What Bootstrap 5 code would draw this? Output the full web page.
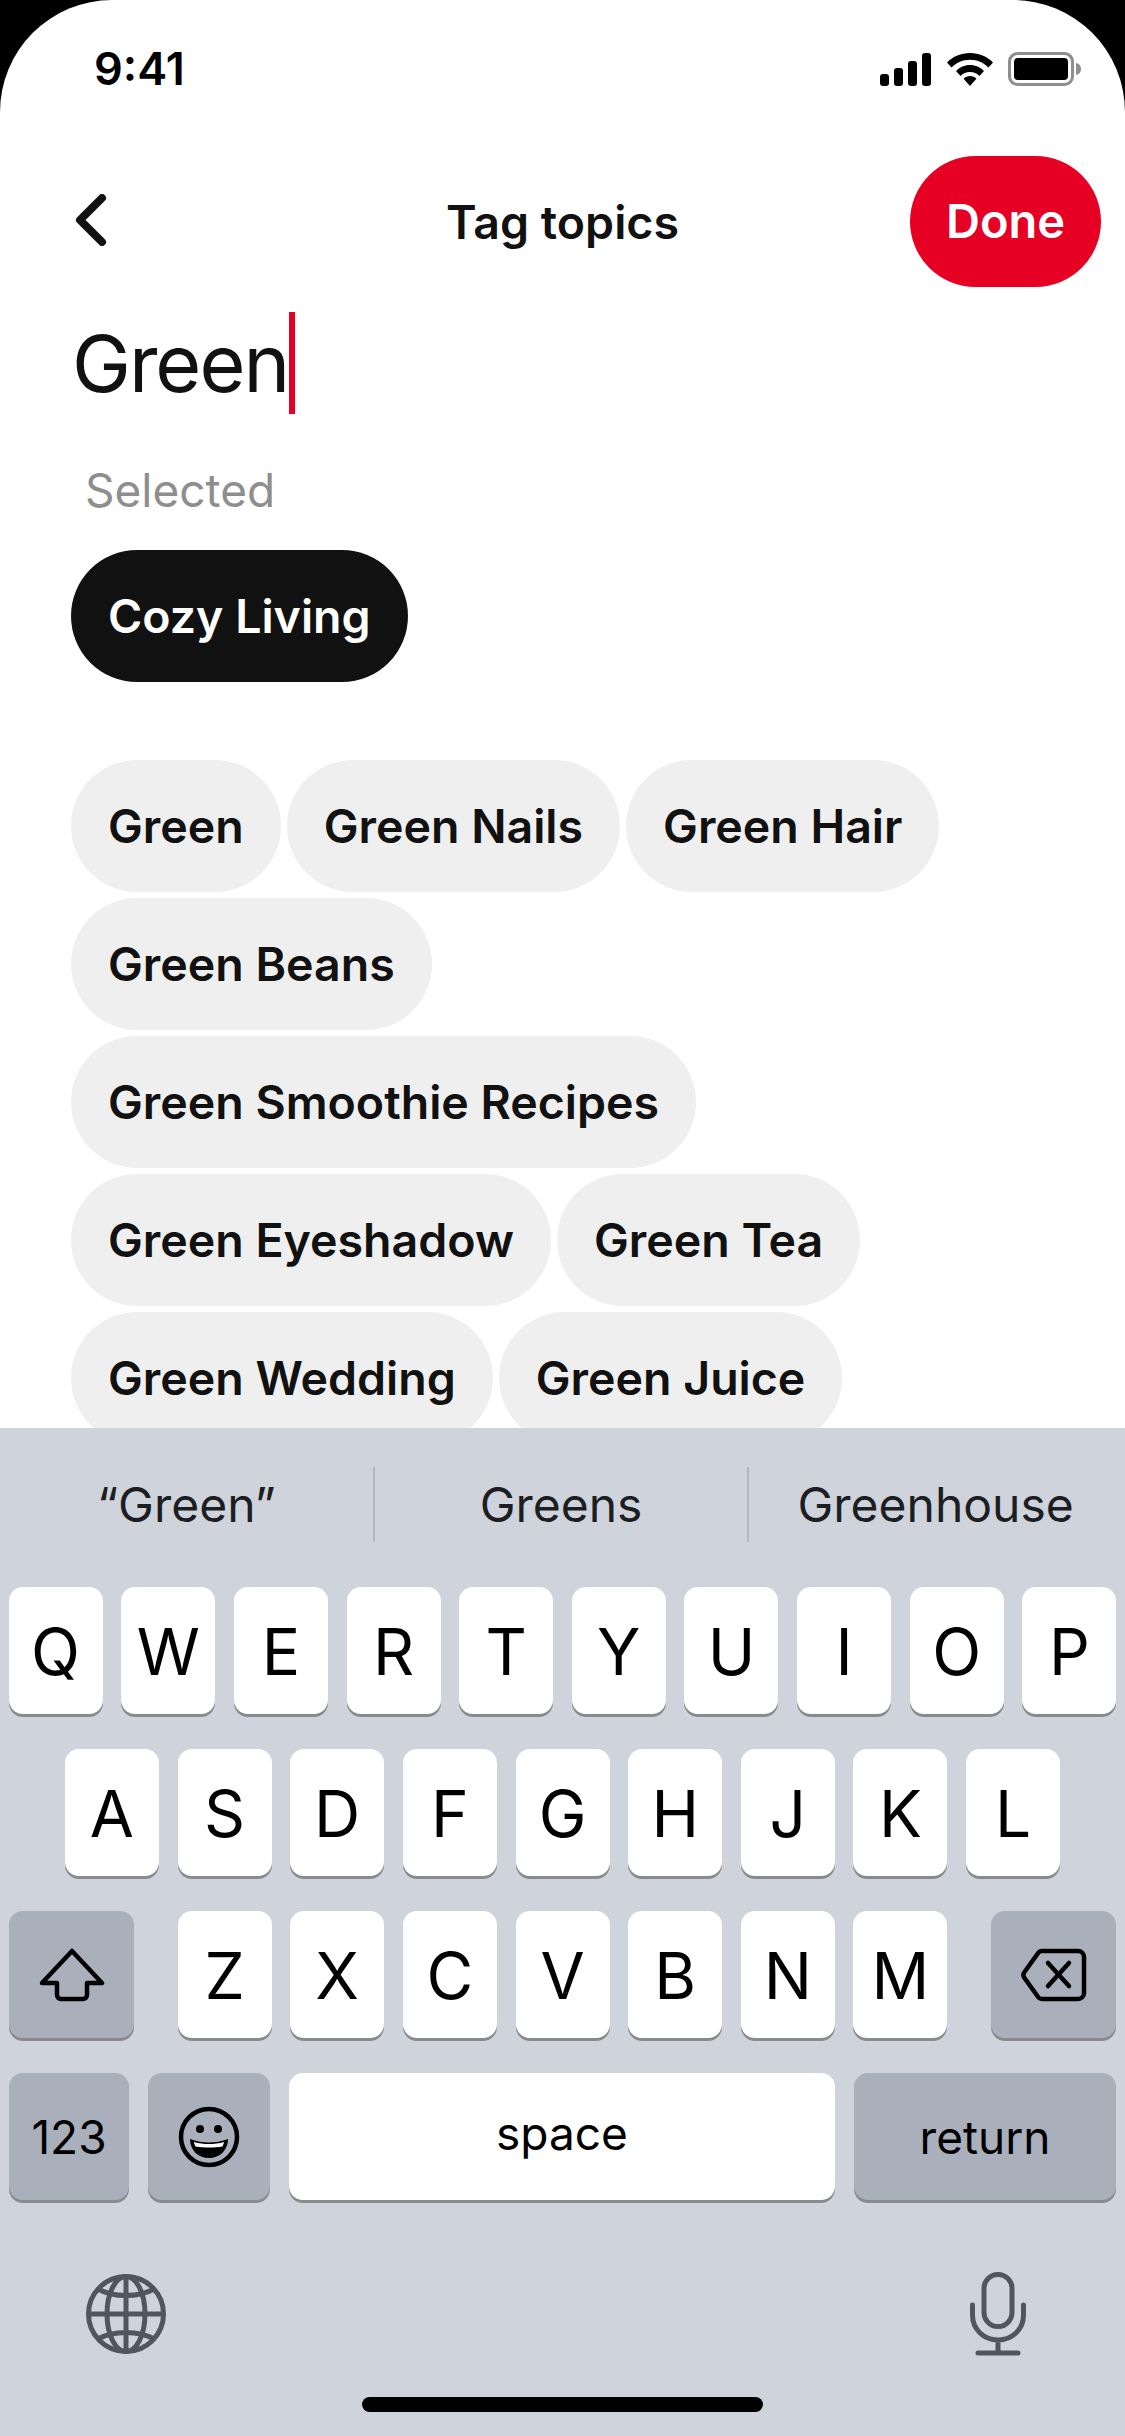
<!DOCTYPE html>
<html lang="en">
<head>
  <meta charset="UTF-8">
  <title>Tag topics</title>
  <link href="https://cdn.jsdelivr.net/npm/bootstrap@5.3.2/dist/css/bootstrap.min.css" rel="stylesheet">
  <style>
    html, body { background: #000; margin: 0; }
    body { font-family: "Inter", "Liberation Sans", sans-serif; color: #111; }
    .phone-screen { width: 1125px; height: 2436px; background: #fff; border-radius: 112px 112px 0 0; overflow: hidden; }

    .top-area { height: 1428px; overflow: hidden; }
    .status-row { height: 156px; padding: 44px 43px 0 94px; }
    .status-time { font-size: 45px; font-weight: 600; line-height: 50px; color: #000; }
    .status-icons { margin-top: 8px; gap: 15px; }
    .header-row { display: grid; grid-template-columns: 1fr auto 1fr; align-items: center; height: 131px; padding: 0 24px; }
    .back-btn { margin-left: 50px; margin-top: 3px; }
    .page-title { font-size: 46.5px; font-weight: 560; margin: 0; line-height: 56px; }
    .done-btn { background: #e60023; color: #fff; border: 0; border-radius: 66px; width: 191px; height: 131px; font-size: 47px; font-weight: 560; padding: 0; }
    .done-btn:hover { background: #e60023; color: #fff; }
    .search-word { margin-top: 25px; height: 102px; padding-left: 72px; font-size: 79px; line-height: 102px; letter-spacing: -2px; }
    .text-caret { width: 6px; height: 102px; background: #e60023; margin-left: 1px; }
    .selected-label { margin-top: 48px; padding-left: 85px; font-size: 46px; line-height: 56px; color: #8e8e8e; }
    .chip-list { padding-left: 71px; padding-right: 100px; gap: 6px; }
    .chip-list.picked { margin-top: 32px; }
    .chip-list.found { margin-top: 78px; }
    .topic-chip { height: 132px; padding: 0 37px; border: 0; border-radius: 66px; font-size: 46.5px; font-weight: 560; background: #efefef; color: #111; line-height: 1; }
    .topic-chip:hover { background: #efefef; color: #111; }
    .topic-chip.on, .topic-chip.on:hover { background: #111; color: #fff; }

    .kb-panel { height: 1008px; background: #cfd3dc; }
    .suggest-row { height: 159px; padding: 39px 3px 0 0; }
    .suggest-item { flex: 1 1 0; height: 75px; font-size: 48px; color: #1c1e21; }
    .suggest-sep { width: 2px; height: 75px; background: #b4b8c1; }
    .key-row { height: 129px; margin-bottom: 33px; gap: 18.67px; }
    .kb-key { width: 94px; height: 127px; padding-top: 2px; background: #fff; border-radius: 14px; box-shadow: 0 3px 0 #898a8d; font-size: 64px; line-height: 1; color: #000; }
    .kb-key.dark { background: #a9b0bc; }
    .kb-key.wide { width: 125px; padding-top: 0; }
    .key-row.last { gap: 19px; padding: 0 9px; }
    .word-key { font-size: 46px; padding-top: 0; }
    .key-123 { width: 120px; }
    .key-emoji { width: 122px; padding-top: 0; }
    .key-space { width: 546px; padding-bottom: 8px; }
    .key-return { width: 262px; }
    .letter-group { gap: 18.67px; }
    .shift-row { padding: 0 9px; }
    .extra-row { padding: 36px 99px 0 86px; height: 121px; }
    .home-bar { width: 401px; height: 15px; border-radius: 8px; background: #000; margin: 41px auto 0; }
  </style>
</head>
<body>

<div class="phone-screen">
  <div class="top-area">
    <div class="status-row d-flex justify-content-between align-items-start">
      <span class="status-time">9:41</span>
      <div class="status-icons d-flex align-items-center">
        <svg width="52" height="33" viewBox="0 0 52 33"><rect x="0" y="21" width="9" height="12" rx="3"/><rect x="14" y="15" width="9" height="18" rx="3"/><rect x="28" y="8" width="9" height="25" rx="3"/><rect x="42" y="0" width="9" height="33" rx="3"/></svg>
        <svg width="46" height="33" viewBox="0 0 46 33"><path d="M23 0C14 0 6 3.500 0 9.500l4.500 5C9.500 9.500 16 6.800 23 6.800s13.500 2.700 18.500 7.700l4.500-5C40 3.500 32 0 23 0z"/><path d="M23 12c-5.500 0-10.500 2.200-14 6l4.500 5c2.400-2.500 5.800-4 9.500-4s7.100 1.500 9.500 4l4.500-5c-3.500-3.800-8.500-6-14-6z"/><path d="M23 23c-2.500 0-4.800 1-6.400 2.700L23 33l6.400-7.300C27.800 24 25.500 23 23 23z"/></svg>
        <svg width="74" height="34" viewBox="0 0 74 34"><rect x="1.500" y="1.500" width="63" height="31" rx="8" fill="none" stroke="#8e8e8e" stroke-width="3"/><rect x="6" y="6" width="54" height="22" rx="4"/><path d="M68 11c3 .5 5 3 5 6s-2 5.500-5 6z" fill="#8e8e8e"/></svg>
      </div>
    </div>

    <div class="header-row">
      <div>
        <a href="#" class="back-btn d-inline-block" aria-label="Back">
          <svg width="36" height="52" viewBox="0 0 36 52" class="d-block"><path d="M28 4 6 26l22 22" fill="none" stroke="#111" stroke-width="8" stroke-linecap="round" stroke-linejoin="round"/></svg>
        </a>
      </div>
      <h1 class="page-title">Tag topics</h1>
      <div class="text-end"><button class="btn done-btn">Done</button></div>
    </div>

    <div class="search-word d-flex"><span>Green</span><span class="text-caret"></span></div>
    <div class="selected-label">Selected</div>

    <div class="chip-list picked d-flex flex-wrap">
      <button class="btn topic-chip on">Cozy Living</button>
    </div>

    <div class="chip-list found d-flex flex-wrap">
      <button class="btn topic-chip">Green</button>
      <button class="btn topic-chip">Green Nails</button>
      <button class="btn topic-chip">Green Hair</button>
      <button class="btn topic-chip">Green Beans</button>
      <button class="btn topic-chip">Green Smoothie Recipes</button>
      <button class="btn topic-chip">Green Eyeshadow</button>
      <button class="btn topic-chip">Green Tea</button>
      <button class="btn topic-chip">Green Wedding</button>
      <button class="btn topic-chip">Green Juice</button>
    </div>
  </div>

  <div class="kb-panel">
    <div class="suggest-row d-flex align-items-start">
      <div class="suggest-item d-flex align-items-center justify-content-center">“Green”</div>
      <div class="suggest-sep"></div>
      <div class="suggest-item d-flex align-items-center justify-content-center">Greens</div>
      <div class="suggest-sep"></div>
      <div class="suggest-item d-flex align-items-center justify-content-center">Greenhouse</div>
    </div>

    <div class="key-row d-flex justify-content-center">
      <div class="kb-key d-flex align-items-center justify-content-center">Q</div>
      <div class="kb-key d-flex align-items-center justify-content-center">W</div>
      <div class="kb-key d-flex align-items-center justify-content-center">E</div>
      <div class="kb-key d-flex align-items-center justify-content-center">R</div>
      <div class="kb-key d-flex align-items-center justify-content-center">T</div>
      <div class="kb-key d-flex align-items-center justify-content-center">Y</div>
      <div class="kb-key d-flex align-items-center justify-content-center">U</div>
      <div class="kb-key d-flex align-items-center justify-content-center">I</div>
      <div class="kb-key d-flex align-items-center justify-content-center">O</div>
      <div class="kb-key d-flex align-items-center justify-content-center">P</div>
    </div>

    <div class="key-row d-flex justify-content-center">
      <div class="kb-key d-flex align-items-center justify-content-center">A</div>
      <div class="kb-key d-flex align-items-center justify-content-center">S</div>
      <div class="kb-key d-flex align-items-center justify-content-center">D</div>
      <div class="kb-key d-flex align-items-center justify-content-center">F</div>
      <div class="kb-key d-flex align-items-center justify-content-center">G</div>
      <div class="kb-key d-flex align-items-center justify-content-center">H</div>
      <div class="kb-key d-flex align-items-center justify-content-center">J</div>
      <div class="kb-key d-flex align-items-center justify-content-center">K</div>
      <div class="kb-key d-flex align-items-center justify-content-center">L</div>
    </div>

    <div class="key-row shift-row d-flex justify-content-between">
      <div class="kb-key dark wide d-flex align-items-center justify-content-center">
        <svg width="66" height="54" viewBox="0 0 66 54"><path d="M33 3 63 35H48V47a4 4 0 0 1-4 4H22a4 4 0 0 1-4-4V35H3z" fill="none" stroke="#000" stroke-width="4.500" stroke-linejoin="round"/></svg>
      </div>
      <div class="letter-group d-flex">
        <div class="kb-key d-flex align-items-center justify-content-center">Z</div>
        <div class="kb-key d-flex align-items-center justify-content-center">X</div>
        <div class="kb-key d-flex align-items-center justify-content-center">C</div>
        <div class="kb-key d-flex align-items-center justify-content-center">V</div>
        <div class="kb-key d-flex align-items-center justify-content-center">B</div>
        <div class="kb-key d-flex align-items-center justify-content-center">N</div>
        <div class="kb-key d-flex align-items-center justify-content-center">M</div>
      </div>
      <div class="kb-key dark wide d-flex align-items-center justify-content-center">
        <svg width="66" height="54" viewBox="0 0 66 54"><path d="M21 3H57a6 6 0 0 1 6 6V45a6 6 0 0 1-6 6H21a5 5 0 0 1-3.500-1.500L3.500 30a5 5 0 0 1 0-6L17.500 4.500A5 5 0 0 1 21 3z" fill="none" stroke="#000" stroke-width="4.500" stroke-linejoin="round"/><path d="M27 15 48 38M48 15 27 38" fill="none" stroke="#000" stroke-width="4.500" stroke-linecap="round"/></svg>
      </div>
    </div>

    <div class="key-row last d-flex">
      <div class="kb-key dark key-123 word-key d-flex align-items-center justify-content-center">123</div>
      <div class="kb-key dark key-emoji d-flex align-items-center justify-content-center">
        <svg width="62" height="62" viewBox="0 0 62 62"><circle cx="31" cy="31" r="28" fill="none" stroke="#000" stroke-width="4.500"/><circle cx="22" cy="23" r="4"/><circle cx="40" cy="23" r="4"/><path d="M12 33c6 2.500 13 3.500 19 3.500s13-1 19-3.500c0 11-8 19-19 19S12 44 12 33z"/><path d="M16 36c5 1.500 10 2 15 2s10-.5 15-2c-.3 1.800-.8 3-1.500 4.500-4 .7-9 1-13.500 1s-9.500-.3-13.500-1C16.800 39 16.300 37.800 16 36z" fill="#fff"/></svg>
      </div>
      <div class="kb-key key-space word-key d-flex align-items-center justify-content-center">space</div>
      <div class="kb-key dark key-return word-key d-flex align-items-center justify-content-center">return</div>
    </div>

    <div class="extra-row d-flex justify-content-between align-items-center">
      <svg width="80" height="80" viewBox="0 0 80 80" fill="none" stroke="#50565e" stroke-width="5"><circle cx="40" cy="40" r="37.500"/><ellipse cx="40" cy="40" rx="19" ry="37.500"/><path d="M40 2.500v75M2.500 40h75M12 15c8 4.500 18 6.500 28 6.500S60 19.500 68 15M12 65c8-4.500 18-6.500 28-6.500S60 60.500 68 65"/></svg>
      <svg width="56" height="84" viewBox="0 0 56 84" fill="none" stroke="#50565e" stroke-width="5" stroke-linecap="round"><rect x="14" y="2.500" width="28" height="52" rx="14"/><path d="M2.500 33v10c0 14 11 25 25.500 25s25.500-11 25.500-25V33M28 68v13M8 81h40"/></svg>
    </div>

    <div class="home-bar"></div>
  </div>
</div>

</body>
</html>
